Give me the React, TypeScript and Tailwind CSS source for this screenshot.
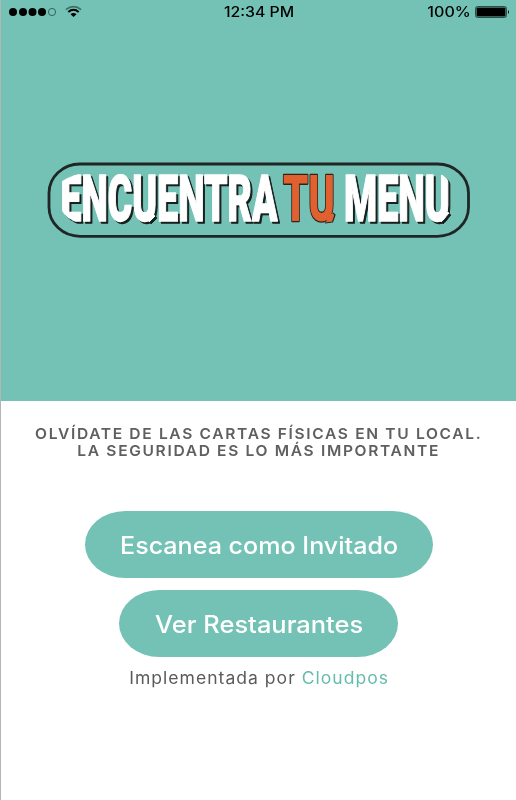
import type { ReactNode } from 'react';

function StatusBar() {
  return (
    <div className="grid h-6 grid-cols-3 pl-2 pr-[6px] text-black">
      <div className="flex h-[23px] items-center">
        <svg width="76" height="18" viewBox="0 0 76 18" aria-label="Signal and Wi-Fi">
          <circle cx="4" cy="9" r="4" />
          <circle cx="14" cy="9" r="4" />
          <circle cx="23.5" cy="9" r="4" />
          <circle cx="33" cy="9" r="4" />
          <circle cx="43" cy="9" r="3.6" fill="none" stroke="#244b44" strokeWidth="0.8" />
          <path d="M56.8 6.7Q64.5 0.6 72.2 6.7" fill="none" stroke="#3c7167" strokeWidth="1.6" />
          <path d="M59.3 9Q64.5 4.6 69.7 9" fill="none" stroke="#000" strokeWidth="2" />
          <path d="M61.5 11.2Q64.5 8.6 67.5 11.2L64.5 14Z" />
        </svg>
      </div>
      <div className="flex h-[22px] items-center justify-center whitespace-nowrap text-[14px] font-medium">
        <span className="scale-x-[1.13]">12:34 PM</span>
      </div>
      <div className="flex h-[23px] items-center justify-end gap-[4px] text-[14px] font-medium">
        <span className="origin-right scale-x-[1.15]">100%</span>
        <svg width="35" height="12" viewBox="0 0 35 12" aria-label="Battery">
          <rect x="0.5" y="0.5" width="31" height="11" rx="2" fill="none" stroke="#285148" />
          <rect x="1.5" y="1.5" width="29" height="9" rx="0.7" />
          <path d="M33 4Q35 6 33 8Z" />
        </svg>
      </div>
    </div>
  );
}

function Logo() {
  return (
    <svg width="424" height="76" viewBox="46 162 424 76" role="img" aria-label="Encuentra tu menu">
      <defs>
        <clipPath id="word-edge">
          <path d="M61 182Q66 178 78 174H440Q446 176 450 184V212L443 224H82Q66 220 61 209Z" />
        </clipPath>
      </defs>
      <rect x="49" y="164" width="419.5" height="72.3" rx="31" ry="29" fill="none" stroke="#202625" strokeWidth="2.8" />
      <g className="drop-shadow-[2px_2px_0_#17201e]">
        <g clipPath="url(#word-edge)" fontFamily="Roboto, sans-serif" fontWeight="900" fontSize="64" fill="#fff" stroke="#fff" strokeWidth="1.4" strokeLinejoin="round">
          <text x="60.5" y="221" textLength="217" lengthAdjust="spacingAndGlyphs">ENCUENTRA</text>
          <text x="344" y="221" textLength="106" lengthAdjust="spacingAndGlyphs">MENU</text>
          <path d="M150 213L155 216L149 222Z" strokeWidth="1" />
          <path d="M443 211L449 213L441 222Z" strokeWidth="1" />
        </g>
      </g>
      <g fontFamily="Roboto, sans-serif" fontWeight="900" fontSize="64" fill="#e0602f" stroke="#332018" strokeLinejoin="round">
        <text x="283" y="221" textLength="52" lengthAdjust="spacingAndGlyphs" strokeWidth="2.6" paintOrder="stroke">TU</text>
        <path d="M329 213L334.5 215L332 221.5L326 222.5Z" stroke="none" />
        <path d="M333 213L335 215L332.5 222L325 223" fill="none" strokeWidth="1.2" />
      </g>
    </svg>
  );
}

function PillButton({ className, children }: { className: string; children: ReactNode }) {
  return (
    <button className={`flex h-[67px] items-center justify-center whitespace-nowrap rounded-[41px/34px] bg-[#74c2b5] pl-px pt-[3px] text-[24px] font-medium text-white ${className}`}>
      {children}
    </button>
  );
}

export default function App() {
  return (
    <main className="flex h-[800px] w-[516px] flex-col overflow-hidden border-l border-[#b5b5b5] bg-white font-['Inter',sans-serif]">
      <header className="-ml-px flex h-[401px] flex-col border-l border-[#569b8e] bg-[#74c2b5]">
        <StatusBar />
        <div className="flex pl-[45px] pt-[138px]">
          <Logo />
        </div>
      </header>
      <section className="flex flex-col items-center">
        <h1 className="mt-[25px] flex scale-x-[1.037] flex-col items-center whitespace-nowrap pl-px text-[15px] font-semibold leading-[16.5px] tracking-[1.6px] text-[#5f5f5f]">
          <span>OLVÍDATE DE LAS CARTAS FÍSICAS EN TU LOCAL.</span>
          <span>LA SEGURIDAD ES LO MÁS IMPORTANTE</span>
        </h1>
        <div className="mt-[52px] flex flex-col items-center gap-3">
          <PillButton className="w-[348px]">
            <span className="scale-x-[1.045]">Escanea como Invitado</span>
          </PillButton>
          <PillButton className="w-[279px]">
            <span className="scale-x-[1.06]">Ver Restaurantes</span>
          </PillButton>
        </div>
        <p className="mt-[9px] scale-x-[1.03] whitespace-nowrap pl-[2px] text-[17px] leading-6 tracking-[1px] text-[#5a5a5a]">
          Implementada por <a className="text-[#66bcac]">Cloudpos</a>
        </p>
      </section>
    </main>
  );
}
